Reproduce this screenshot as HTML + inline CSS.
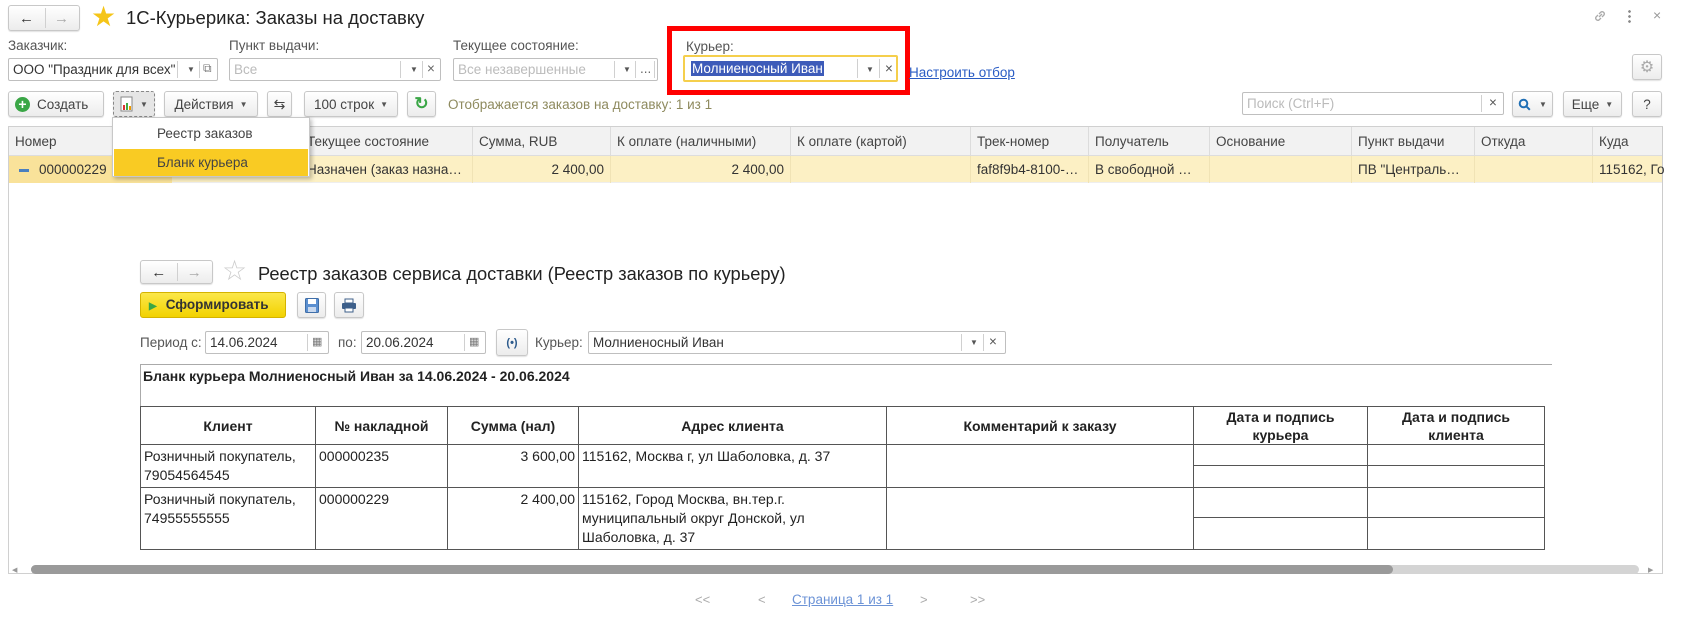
<!DOCTYPE html>
<html><head><meta charset="utf-8">
<style>
*{box-sizing:border-box;margin:0;padding:0}
body{width:1681px;height:618px;background:#fff;font-family:"Liberation Sans",Arial,sans-serif;font-size:13px;color:#333;position:relative;overflow:hidden}
.a{position:absolute}
.btn{position:absolute;border:1px solid #c8c8c8;border-radius:3px;background:linear-gradient(#fff,#ececec);box-shadow:0 1px 1px rgba(0,0,0,.12);display:flex;align-items:center;justify-content:center;color:#444;font-size:13.5px}
.inp{position:absolute;border:1px solid #bfbfbf;background:#fff;border-radius:2px;font-size:13.5px;display:flex;align-items:center;padding-left:4px;white-space:nowrap}
.lbl{position:absolute;color:#555;font-size:13.5px}
.sep{position:absolute;top:2px;bottom:2px;width:1px;background:#d0d0d0}
.dd{font-size:8px;color:#555}
.hc{position:absolute;top:0;height:29px;line-height:29px;padding-left:6px;color:#444;font-size:13.5px;border-right:1px solid #dcdcdc;white-space:nowrap;overflow:hidden}
.rc{position:absolute;top:0;height:27px;line-height:27px;padding:0 6px;color:#333;font-size:13.5px;border-right:1px solid #f0e3b5;white-space:nowrap;overflow:hidden}
table{border-collapse:collapse;position:absolute;left:140px;top:406px;font-size:14px;color:#222}
td{border:1px solid #555;vertical-align:top;padding:2px 3px;line-height:19px}
th{border:1px solid #555;font-weight:bold;text-align:center;vertical-align:middle;line-height:18px;font-size:14px}
</style></head><body>

<!-- top nav -->
<div class="btn" style="left:8px;top:5px;width:72px;height:26px;justify-content:space-around">
<span style="font-size:15px;color:#333">&#8592;</span><span class="sep" style="left:36px"></span><span style="font-size:15px;color:#aaa">&#8594;</span></div>
<div class="a" style="left:91px;top:2px;font-size:28px;color:#f5c518;line-height:30px">&#9733;</div>
<div class="a" style="left:126px;top:7px;font-size:18.5px;color:#222">1С-Курьерика: Заказы на доставку</div>
<svg class="a" style="left:1592px;top:8px" width="16" height="16" viewBox="0 0 16 16" fill="none" stroke="#aaa" stroke-width="1.3"><path d="M7 9l3-3M6 7l-2 2a2.2 2.2 0 003 3l2-2M10 9l2-2a2.2 2.2 0 00-3-3L7 6"/></svg>
<div class="a" style="left:1628px;top:9px;width:3px;height:15px;background:radial-gradient(circle,#888 1.2px,transparent 1.5px) 0 0/3px 5px"></div>
<div class="a" style="left:1653px;top:7px;font-size:14px;color:#999">×</div>

<!-- filters -->
<div class="lbl" style="left:8px;top:38px">Заказчик:</div>
<div class="inp" style="left:8px;top:58px;width:210px;height:23px">ООО "Праздник для всех"
<span class="sep" style="left:168px"></span><span class="a dd" style="left:178px;top:6px">&#9660;</span><span class="sep" style="left:190px"></span><span class="a" style="left:194px;top:2px;color:#777;font-size:12px">&#10697;</span></div>

<div class="lbl" style="left:229px;top:38px">Пункт выдачи:</div>
<div class="inp" style="left:229px;top:58px;width:212px;height:23px;color:#bbb">Все
<span class="sep" style="left:170px"></span><span class="a dd" style="left:180px;top:6px">&#9660;</span><span class="sep" style="left:192px"></span><span class="a" style="left:197px;top:2px;color:#666">×</span></div>

<div class="lbl" style="left:453px;top:38px">Текущее состояние:</div>
<div class="inp" style="left:453px;top:58px;width:205px;height:23px;color:#bbb">Все незавершенные
<span class="sep" style="left:160px"></span><span class="a dd" style="left:169px;top:6px">&#9660;</span><span class="sep" style="left:181px"></span><span class="a" style="left:186px;top:2px;color:#666">...</span><span class="sep" style="left:200px"></span></div>

<div class="a" style="left:667px;top:26px;width:243px;height:69px;border:5px solid #f00"></div>
<div class="lbl" style="left:686px;top:39px">Курьер:</div>
<div class="inp" style="left:683px;top:55px;width:215px;height:27px;border:2px solid #f5cf4c;padding-left:6px"><span style="background:#3d5bb9;color:#fff;padding:0 1px">Молниеносный Иван</span>
<span class="sep" style="left:172px"></span><span class="a dd" style="left:181px;top:8px">&#9660;</span><span class="sep" style="left:194px"></span><span class="a" style="left:200px;top:4px;color:#555">×</span></div>
<div class="a" style="left:909px;top:65px;color:#2a5cc4;text-decoration:underline;font-size:13.5px">Настроить отбор</div>
<div class="btn" style="left:1632px;top:54px;width:30px;height:26px;color:#aaa;font-size:16px">&#9881;</div>

<!-- toolbar -->
<div class="btn" style="left:8px;top:91px;width:96px;height:26px;justify-content:flex-start;padding-left:6px"><span style="display:inline-block;width:15px;height:15px;border-radius:50%;background:#3aa646;color:#fff;font-size:14px;line-height:14px;text-align:center;font-weight:bold;margin-right:7px">+</span>Создать</div>
<div class="btn" style="left:113px;top:91px;width:42px;height:26px;border:1px dashed #888;background:#e6e6e6"><svg width="14" height="16"><rect x="1" y="1" width="11" height="14" fill="#fff" stroke="#888"/><rect x="3" y="9" width="2" height="5" fill="#d33"/><rect x="6" y="7" width="2" height="7" fill="#4a4"/><rect x="9" y="10" width="2" height="4" fill="#e90"/></svg><span class="dd" style="margin-left:6px">&#9660;</span></div>
<div class="btn" style="left:164px;top:91px;width:94px;height:26px">Действия <span class="dd" style="margin-left:6px">&#9660;</span></div>
<div class="btn" style="left:267px;top:91px;width:25px;height:26px;font-size:14px">&#8646;</div>
<div class="btn" style="left:304px;top:91px;width:94px;height:26px">100 строк <span class="dd" style="margin-left:6px">&#9660;</span></div>
<div class="btn" style="left:407px;top:91px;width:29px;height:26px;color:#3aa646;font-size:17px;font-weight:bold">&#8635;</div>
<div class="a" style="left:448px;top:97px;color:#8e8a5e;font-size:13.5px">Отображается заказов на доставку: 1 из 1</div>

<div class="inp" style="left:1242px;top:92px;width:262px;height:23px;color:#bbb">Поиск (Ctrl+F)<span class="sep" style="left:238px"></span><span class="a" style="left:246px;top:2px;color:#555">×</span></div>
<div class="btn" style="left:1512px;top:91px;width:41px;height:26px"><svg width="13" height="13" viewBox="0 0 13 13" fill="none" stroke="#1f6fb5" stroke-width="2"><circle cx="5.5" cy="5.5" r="3.8"/><path d="M8.3 8.3l3.5 3.5"/></svg><span class="dd" style="margin-left:8px">&#9660;</span></div>
<div class="btn" style="left:1563px;top:91px;width:59px;height:26px">Еще <span class="dd" style="margin-left:6px">&#9660;</span></div>
<div class="btn" style="left:1632px;top:91px;width:30px;height:26px">?</div>

<!-- grid -->
<div class="a" style="left:8px;top:126px;width:1655px;height:448px;border:1px solid #d0d0d0;border-right:1px solid #ccc"></div>
<div class="a" style="left:9px;top:127px;width:1653px;height:29px;background:#f2f2f2;border-bottom:1px solid #ddd">
<div class="hc" style="left:0;width:292px">Номер</div>
<div class="hc" style="left:292px;width:172px">Текущее состояние</div>
<div class="hc" style="left:464px;width:138px">Сумма, RUB</div>
<div class="hc" style="left:602px;width:180px">К оплате (наличными)</div>
<div class="hc" style="left:782px;width:180px">К оплате (картой)</div>
<div class="hc" style="left:962px;width:118px">Трек-номер</div>
<div class="hc" style="left:1080px;width:121px">Получатель</div>
<div class="hc" style="left:1201px;width:142px">Основание</div>
<div class="hc" style="left:1343px;width:123px">Пункт выдачи</div>
<div class="hc" style="left:1466px;width:118px">Откуда</div>
<div class="hc" style="left:1584px;width:80px;border:none">Куда</div>
</div>
<div class="a" style="left:9px;top:156px;width:1653px;height:27px;background:#fcf0c4;border-bottom:1px solid #eee">
<div class="a" style="left:0;top:0;width:163px;height:27px;background:#f9e29a"></div>
<div class="rc" style="left:0;width:292px;border:none"><span style="display:inline-block;width:10px;height:3px;background:#4a7fbf;vertical-align:middle;margin:0 10px 0 4px"></span>000000229</div>
<div class="rc" style="left:292px;width:172px">Назначен (заказ назна…</div>
<div class="rc" style="left:464px;width:138px;text-align:right">2 400,00</div>
<div class="rc" style="left:602px;width:180px;text-align:right">2 400,00</div>
<div class="rc" style="left:782px;width:180px"></div>
<div class="rc" style="left:962px;width:118px">faf8f9b4-8100-…</div>
<div class="rc" style="left:1080px;width:121px">В свободной …</div>
<div class="rc" style="left:1201px;width:142px"></div>
<div class="rc" style="left:1343px;width:123px">ПВ "Централь…</div>
<div class="rc" style="left:1466px;width:118px"></div>
<div class="rc" style="left:1584px;width:80px;border:none">115162, Го</div>
</div>

<!-- dropdown -->
<div class="a" style="left:112px;top:117px;width:198px;height:60px;background:#fff;border:1px solid #c8c8c8;box-shadow:2px 2px 4px rgba(0,0,0,.25)">
<div class="a" style="left:44px;top:8px;font-size:13.5px;color:#444">Реестр заказов</div>
<div class="a" style="left:1px;top:31px;width:194px;height:27px;background:#f9cb23;padding-left:43px;line-height:27px;font-size:13.5px;color:#444">Бланк курьера</div>
</div>

<!-- report form -->
<div class="btn" style="left:140px;top:260px;width:73px;height:24px;justify-content:space-around"><span style="font-size:15px;color:#333">&#8592;</span><span class="sep" style="left:36px"></span><span style="font-size:15px;color:#aaa">&#8594;</span></div>
<div class="a" style="left:222px;top:256px;font-size:28px;color:#ccc;line-height:30px">&#9734;</div>
<div class="a" style="left:258px;top:263px;font-size:18.3px;color:#222">Реестр заказов сервиса доставки (Реестр заказов по курьеру)</div>

<div class="a" style="left:140px;top:292px;width:146px;height:26px;border:1px solid #d4b300;border-radius:3px;background:linear-gradient(#fbe74a,#f2d200);font-weight:bold;font-size:13.5px;color:#333;line-height:24px;padding-left:8px"><span style="color:#3aa646;font-size:10px;margin-right:9px">&#9654;</span>Сформировать</div>
<div class="btn" style="left:297px;top:292px;width:29px;height:26px"><svg width="14" height="15"><rect x="0.5" y="0.5" width="13" height="14" rx="1" fill="#5b8fd0" stroke="#3f6ea8"/><rect x="3" y="1" width="8" height="5" fill="#fff"/><rect x="3" y="9" width="8" height="5" fill="#c8d8ee"/></svg></div>
<div class="btn" style="left:334px;top:292px;width:30px;height:26px"><svg width="16" height="15"><rect x="4" y="1" width="8" height="4" fill="#fff" stroke="#3d5f8a"/><rect x="1" y="5" width="14" height="6" rx="1" fill="#3d5f8a"/><rect x="4" y="10" width="8" height="4" fill="#fff" stroke="#3d5f8a"/></svg></div>

<div class="lbl" style="left:140px;top:335px">Период с:</div>
<div class="inp" style="left:205px;top:331px;width:124px;height:23px">14.06.2024<span class="sep" style="left:101px"></span><span class="a" style="left:106px;top:3px;font-size:11px;color:#777">&#9638;</span></div>
<div class="lbl" style="left:338px;top:335px">по:</div>
<div class="inp" style="left:361px;top:331px;width:125px;height:23px">20.06.2024<span class="sep" style="left:102px"></span><span class="a" style="left:107px;top:3px;font-size:11px;color:#777">&#9638;</span></div>
<div class="btn" style="left:496px;top:329px;width:32px;height:27px;color:#2c5a8c;font-size:11px;font-weight:bold">(&#8226;)</div>
<div class="lbl" style="left:535px;top:335px">Курьер:</div>
<div class="inp" style="left:588px;top:331px;width:418px;height:23px">Молниеносный Иван<span class="sep" style="left:372px"></span><span class="a dd" style="left:381px;top:6px">&#9660;</span><span class="sep" style="left:394px"></span><span class="a" style="left:400px;top:2px;color:#555">×</span></div>

<div class="a" style="left:140px;top:364px;width:1412px;height:1px;background:#aaa"></div>
<div class="a" style="left:140px;top:364px;width:1px;height:42px;background:#aaa"></div>
<div class="a" style="left:143px;top:368px;font-weight:bold;font-size:14px;color:#222">Бланк курьера Молниеносный Иван за 14.06.2024 - 20.06.2024</div>

<table>
<tr style="height:38px"><th style="width:175px">Клиент</th><th style="width:132px">№ накладной</th><th style="width:131px">Сумма (нал)</th><th style="width:308px">Адрес клиента</th><th style="width:307px">Комментарий к заказу</th><th style="width:174px">Дата и подпись<br>курьера</th><th style="width:177px">Дата и подпись<br>клиента</th></tr>
<tr style="height:21px"><td rowspan="2">Розничный покупатель,<br>79054564545</td><td rowspan="2">000000235</td><td rowspan="2" style="text-align:right">3 600,00</td><td rowspan="2">115162, Москва г, ул Шаболовка, д. 37</td><td rowspan="2"></td><td></td><td></td></tr>
<tr style="height:22px"><td></td><td></td></tr>
<tr style="height:28px"><td rowspan="2">Розничный покупатель,<br>74955555555</td><td rowspan="2">000000229</td><td rowspan="2" style="text-align:right">2 400,00</td><td rowspan="2">115162, Город Москва, вн.тер.г.<br>муниципальный округ Донской, ул<br>Шаболовка, д. 37</td><td rowspan="2"></td><td></td><td></td></tr>
<tr style="height:29px"><td></td><td></td></tr>
</table>

<!-- scrollbar -->
<div class="a" style="left:12px;top:566px;font-size:7px;color:#999">&#9664;</div>
<div class="a" style="left:31px;top:565px;width:1608px;height:9px;border-radius:5px;background:#d4d4d4"></div>
<div class="a" style="left:31px;top:565px;width:1362px;height:9px;border-radius:5px;background:#9a9a9a"></div>
<div class="a" style="left:1648px;top:566px;font-size:7px;color:#999">&#9654;</div>

<!-- pagination -->
<div class="a" style="left:695px;top:592px;color:#aaa;font-size:13px">&lt;&lt;</div>
<div class="a" style="left:758px;top:592px;color:#aaa;font-size:13px">&lt;</div>
<div class="a" style="left:792px;top:592px;color:#6c93d6;font-size:13.5px;text-decoration:underline">Страница 1 из 1</div>
<div class="a" style="left:920px;top:592px;color:#aaa;font-size:13px">&gt;</div>
<div class="a" style="left:970px;top:592px;color:#aaa;font-size:13px">&gt;&gt;</div>
</body></html>
